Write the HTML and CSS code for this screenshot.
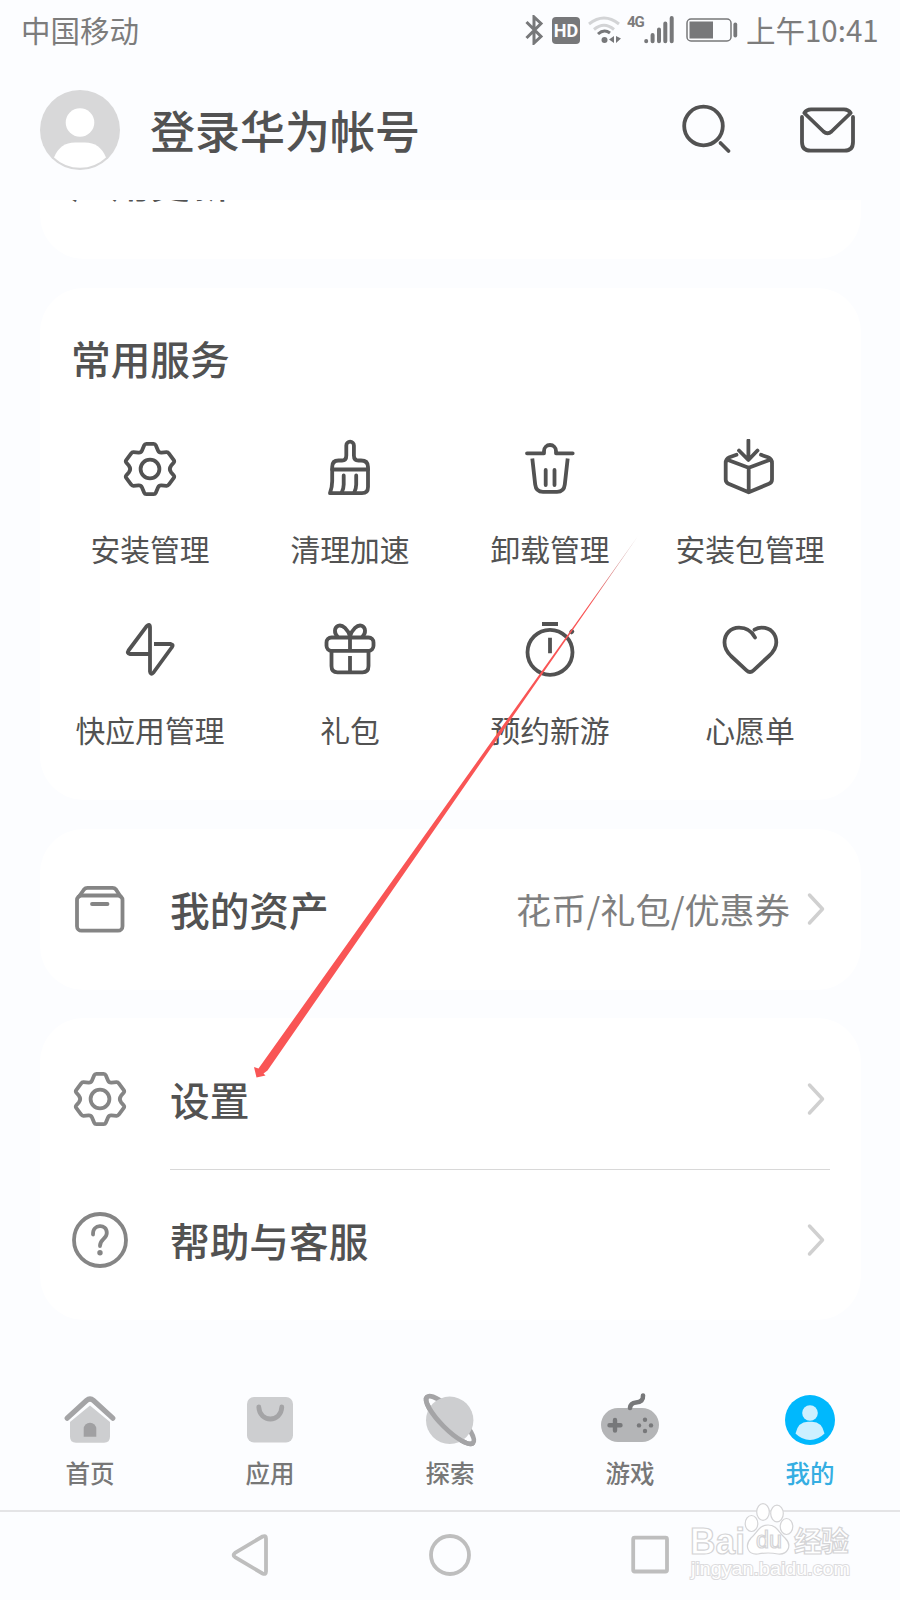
FILE: index.html
```html
<!DOCTYPE html>
<html lang="zh-CN">
<head>
  <meta charset="UTF-8">
  <meta name="viewport" content="width=device-width, initial-scale=1.0">
  <title>我的</title>
  <link rel="stylesheet" href="styles.css">
</head>
<body>
  <!-- Shared icons -->
  <svg width="0" height="0" class="defs">
    <symbol id="gear" viewBox="0 0 60 60">
      <path d="M26.3 4.8H33.7Q35.2 4.8 35.8 6.2L38 11.5Q39 13.8 41.5 13.6L46.5 13.2Q48 13.1 48.8 14.4L53.8 21.2Q54.7 22.5 53.6 23.8L51 26.8Q48.6 30 51 33.2L53.6 36.2Q54.7 37.5 53.8 38.8L48.8 45.6Q48 46.9 46.5 46.8L41.5 46.4Q39 46.2 38 48.5L35.8 53.8Q35.2 55.2 33.7 55.2H26.3Q24.8 55.2 24.2 53.8L22 48.5Q21 46.2 18.5 46.4L13.5 46.8Q12 46.9 11.2 45.6L6.2 38.8Q5.3 37.5 6.4 36.2L9 33.2Q11.4 30 9 26.8L6.4 23.8Q5.3 22.5 6.2 21.2L11.2 14.4Q12 13.1 13.5 13.2L18.5 13.6Q21 13.8 22 11.5L24.2 6.2Q24.8 4.8 26.3 4.8Z"/>
      <circle cx="30" cy="30" r="9.4"/>
    </symbol>
    <symbol id="chevron" viewBox="0 0 20 36">
      <path d="M3.5 4L16.5 18L3.5 32"/>
    </symbol>
  </svg>

  <div class="status-bar">
    <span class="carrier">中国移动</span>
    <div class="status-icons">
      <svg class="bluetooth" width="20" height="30" viewBox="0 0 20 30">
        <path d="M2.5 7L17 21.5L10 28V2L17 8.5L2.5 23"/>
      </svg>
      <span class="hd">HD</span>
      <svg class="wifi" width="34" height="30" viewBox="0 0 34 30">
        <path class="weak" d="M1 9Q16 -3 31 9M6 14.5Q16 6 26 14.5"/>
        <path d="M10 19Q16 13.5 22 18"/>
        <circle cx="16.5" cy="25" r="3"/>
        <path class="fill" d="M26 21v7l-5-3.5zM28 21v7l5-4.5z"/>
      </svg>
      <span class="net">4G</span>
      <svg class="signal" width="30" height="30" viewBox="0 0 30 30">
        <path d="M2.2 26V26.2M8.6 20V26.2M15 14.5V26.2M21.3 8.5V26.2M27.7 3V26.2"/>
      </svg>
      <svg class="battery" width="52" height="26" viewBox="0 0 52 26">
        <rect x="1" y="2" width="44" height="22" rx="4"/>
        <rect class="fill" x="3.5" y="4.5" width="23.5" height="17"/>
        <path d="M49.3 7.5V18.5"/>
      </svg>
    </div>
    <span class="time">上午10:41</span>
  </div>

  <header class="header">
    <svg class="avatar" width="80" height="80" viewBox="0 0 80 80">
      <circle cx="40" cy="40" r="40" fill="#d8d8d9"/>
      <circle cx="40" cy="32.5" r="14.3" fill="#fff"/>
      <path d="M14 67.5Q20 52.5 35 52.5H45Q60 52.5 66 67.5Q55 77.8 40 77.8T14 67.5Z" fill="#fff"/>
    </svg>
    <h1 class="login">登录华为帐号</h1>
    <svg class="icon search" width="60" height="60" viewBox="0 0 60 60">
      <circle cx="28.5" cy="26" r="19.3"/>
      <path d="M45.5 43L53.5 51"/>
    </svg>
    <svg class="icon" width="60" height="60" viewBox="0 0 60 60">
      <path d="M4 17V42Q4 50.7 12.5 50.7H46.5Q55 50.7 55 42V17"/>
      <path d="M6.3 13Q8.500 9.300 13 9.300H46Q50.500 9.300 52.700 13L33.500 31.500Q29.500 35 25.500 31.500Z"/>
    </svg>
  </header>

  <main class="content">
    <section class="card card-update">
      <h2>应用更新</h2>
    </section>

    <section class="card card-services">
      <h2>常用服务</h2>
      <div class="services">
        <div class="service">
          <svg class="icon" width="60" height="60"><use href="#gear"/></svg>
          <span>安装管理</span>
        </div>
        <div class="service">
          <svg class="icon" width="60" height="60" viewBox="0 0 60 60">
            <path d="M26.3 16.5V6.5a3.8 3.8 0 0 1 7.6 0V16.5Q33.9 21.5 38.5 21.5H41Q48 21.5 48 28V48Q48 54.2 42 54.2H10Q12.2 48 12.2 42V28Q12.2 21.5 18.5 21.5H22Q26.3 21.5 26.3 16.5Z"/>
            <path d="M12.2 30.5H48M23.7 36.5v9q0 4-2 8M36.2 36.5v9q0 4-2 8"/>
          </svg>
          <span>清理加速</span>
        </div>
        <div class="service">
          <svg class="icon" width="60" height="60" viewBox="0 0 60 60">
            <path d="M7 14.3H24V12a6 6 0 0 1 12 0v2.3H52.7"/>
            <path d="M12.3 19.5L15.2 45.5Q16 52.8 23 52.8H37Q44 52.8 44.8 45.5L47.7 19.5" stroke-linecap="butt"/>
            <path d="M25.7 31V46M34.5 31V46"/>
          </svg>
          <span>卸载管理</span>
        </div>
        <div class="service">
          <svg class="icon" width="60" height="60" viewBox="0 0 60 60">
            <path d="M28.4 1.5V20.5M19 11.5L28.4 21L37.5 11.5"/>
            <path d="M16.5 15.8L9.5 18.3Q5.7 20 5.7 24V40.5Q5.7 43.5 8.5 44.7L28.7 53.3L49 44.7Q52 43.5 52 40.5V24Q52 20 48 18.3L41 15.8M8 21L28.7 28.8L49.5 21M28.7 28.8V53"/>
          </svg>
          <span>安装包管理</span>
        </div>
        <div class="service">
          <svg class="icon" width="60" height="60" viewBox="0 0 60 60">
            <path d="M30 34H10Q6.5 33.5 8.5 30.5L26.5 6.3Q29.8 3 30 7V51.5Q30.5 55.5 33.5 52.5L51.7 27.5Q54 24.5 51 24H34" stroke-linecap="butt"/>
          </svg>
          <span>快应用管理</span>
        </div>
        <div class="service">
          <svg class="icon" width="60" height="60" viewBox="0 0 60 60">
            <rect x="6.5" y="17.5" width="47" height="13.3" rx="5"/>
            <path d="M11.5 31V46Q11.5 52.3 17.5 52.3H42.5Q48.5 52.3 48.5 46V31M30 17V31M30 36V52" stroke-linecap="butt"/>
            <path d="M30 16.5C28 9.5 22.5 4.3 18.3 5.8C14 7.5 14 13 17.5 16.5M30 16.5C32 9.5 37.5 4.3 41.7 5.8C46 7.5 46 13 42.5 16.5"/>
          </svg>
          <span>礼包</span>
        </div>
        <div class="service">
          <svg class="icon" width="60" height="60" viewBox="0 0 60 60">
            <circle cx="30" cy="32.3" r="22.5"/>
            <path d="M22 4H38M30 17.7V33.3" stroke-linecap="butt"/>
            <path d="M51.5 12L52 11.5" stroke-width="4.5"/>
          </svg>
          <span>预约新游</span>
        </div>
        <div class="service">
          <svg class="icon" width="60" height="60" viewBox="0 0 60 60">
            <path d="M35 17.5C32 11.5 26 7.7 19 7.7C10.5 7.7 4.5 14 4.5 22.5C4.5 28 7 32 11 36L26.5 50.3Q30 53.5 33.5 50.3L49 36C53.5 31.8 56.3 28 56.3 22.5C56.3 13.5 50.5 7.7 41.7 7.7Q38 7.7 34.5 9.7"/>
          </svg>
          <span>心愿单</span>
        </div>
      </div>
    </section>

    <section class="card card-assets">
      <div class="row">
        <svg class="icon grey" width="60" height="60" viewBox="0 0 60 60">
          <rect x="7" y="16.5" width="45.5" height="35.2" rx="4.5"/>
          <path d="M9 17.5L14 10.5Q15.3 8.8 17.5 8.8H42.5Q44.7 8.8 46 10.5L50.5 17.5M22 25H37.5"/>
        </svg>
        <h2>我的资产</h2>
        <span class="hint">花币/礼包/优惠券</span>
        <svg class="chevron" width="20" height="36"><use href="#chevron"/></svg>
      </div>
    </section>

    <section class="card card-settings">
      <div class="row">
        <svg class="icon grey" width="60" height="60"><use href="#gear"/></svg>
        <h2>设置</h2>
        <svg class="chevron" width="20" height="36"><use href="#chevron"/></svg>
      </div>
      <div class="divider"></div>
      <div class="row">
        <svg class="icon grey" width="60" height="60" viewBox="0 0 60 60">
          <circle cx="30" cy="30" r="26"/>
          <path d="M23 24.5C22.5 13.5 37 13.5 36.8 23C36.8 29 30 29 30 36"/>
          <circle class="dot" cx="30" cy="42.8" r="2.7"/>
        </svg>
        <h2>帮助与客服</h2>
        <svg class="chevron" width="20" height="36"><use href="#chevron"/></svg>
      </div>
    </section>
  </main>

  <nav class="tabs">
    <div class="tab">
      <svg width="60" height="60" viewBox="0 0 60 60">
        <path d="M30 15.5L50 32V46.5Q50 52.7 44 52.7H16Q10 52.7 10 46.5V32Z" fill="#cdced0"/>
        <path d="M7.2 28.2L26.5 10.5Q30 7.5 33.5 10.5L52.8 28.2" fill="none" stroke="#a4a4a6" stroke-width="5.2" stroke-linecap="round"/>
        <path d="M23.7 46.7V39a6.3 6.3 0 0 1 12.6 0V46.7Z" fill="#a0a0a2"/>
      </svg>
      <span>首页</span>
    </div>
    <div class="tab">
      <svg width="60" height="60" viewBox="0 0 60 60">
        <rect x="7" y="7" width="46" height="45.5" rx="7" fill="#cdced0"/>
        <path d="M18.8 17C19.5 33 41.2 33 41.8 17" fill="none" stroke="#a4a4a6" stroke-width="4.8" stroke-linecap="round"/>
      </svg>
      <span>应用</span>
    </div>
    <div class="tab">
      <svg width="60" height="60" viewBox="0 0 60 60">
        <g fill="none" stroke="#a4a4a6" stroke-width="4.8">
          <ellipse cx="0" cy="0" rx="32.5" ry="9" transform="translate(30 30) rotate(45)"/>
          <circle cx="29.7" cy="30.3" r="23.7" fill="#cdced0" stroke="none"/>
          <path d="M-32.5 0A32.5 9 0 0 0 32.5 0" transform="translate(30 30) rotate(45)"/>
        </g>
      </svg>
      <span>探索</span>
    </div>
    <div class="tab">
      <svg width="60" height="60" viewBox="0 0 60 60">
        <rect x="1" y="18" width="58" height="34" rx="17" fill="#b4b5b7"/>
        <path d="M30 18Q30.5 13 36 12.5Q43.5 12 43 5.5" fill="none" stroke="#77787a" stroke-width="4.6" stroke-linecap="round"/>
        <path d="M15 30V40.6M9.5 35.3H20.5" stroke="#77787a" stroke-width="4.4" stroke-linecap="round"/>
        <g fill="#77787a">
          <circle cx="45" cy="29.8" r="2.2"/>
          <circle cx="45" cy="41" r="2.2"/>
          <circle cx="39" cy="35.4" r="2.2"/>
          <circle cx="51" cy="35.4" r="2.2"/>
        </g>
      </svg>
      <span>游戏</span>
    </div>
    <div class="tab active">
      <svg width="60" height="60" viewBox="0 0 60 60">
        <circle cx="30" cy="30" r="25" fill="#00b8fd"/>
        <circle cx="30" cy="23" r="7.8" fill="#cdf0ff"/>
        <path d="M15.5 43.5Q18 31.7 28 31.7H32Q42 31.7 44.5 43.5Q38 50 30 50T15.5 43.5Z" fill="#cdf0ff"/>
      </svg>
      <span>我的</span>
    </div>
  </nav>

  <div class="system-nav">
    <svg width="48" height="48" viewBox="0 0 48 48">
      <path d="M9 21.9L36.5 5.5Q40 4 40 7.5V40.5Q40 44 36.5 42.5L9 26.1Q6.2 24 9 21.9Z"/>
    </svg>
    <svg width="48" height="48" viewBox="0 0 48 48">
      <circle cx="24" cy="24" r="19"/>
    </svg>
    <svg width="48" height="48" viewBox="0 0 48 48">
      <rect x="7.2" y="6.7" width="33.8" height="33.8" rx="1.5"/>
    </svg>
  </div>

  <!-- Arrow pointing at the settings row -->
  <svg class="arrow" width="900" height="1600" viewBox="0 0 900 1600">
    <defs>
      <linearGradient id="fade" gradientUnits="userSpaceOnUse" x1="638" y1="536" x2="590" y2="604">
        <stop offset="0" stop-color="#a06a6a" stop-opacity=".6"/>
        <stop offset="1" stop-color="#f95555"/>
      </linearGradient>
    </defs>
    <path d="M638 536L258.5 1068.5L254 1067L256.5 1077.5L265.5 1075.5L263.5 1073.5L267.5 1070.5Z" fill="url(#fade)"/>
  </svg>

  <!-- Watermark -->
  <svg class="watermark" width="170" height="84" viewBox="0 0 170 84">
    <text x="3" y="52" font-size="36" font-weight="700" textLength="55" lengthAdjust="spacingAndGlyphs">Bai</text>
    <g>
      <ellipse cx="64.5" cy="21.5" rx="6.3" ry="8"/>
      <ellipse cx="76" cy="10" rx="6.3" ry="8.3"/>
      <ellipse cx="90" cy="11.5" rx="6.3" ry="8.3"/>
      <ellipse cx="99.5" cy="24.5" rx="6.3" ry="8"/>
      <path d="M81 23C90 23 92 31 98 36C106 44 100 53 91 52Q81 50 71 52C61 53 57 44 64 36C70 31 72 23 81 23Z"/>
    </g>
    <text class="du" x="69" y="46" font-size="23" textLength="26" lengthAdjust="spacingAndGlyphs">du</text>
    <text x="107" y="50" font-size="28" font-weight="700" textLength="55">经验</text>
    <text class="url" x="4" y="73" font-size="19" textLength="159" lengthAdjust="spacingAndGlyphs">jingyan.baidu.com</text>
  </svg>
</body>
</html>
```
FILE: styles.css
```css
* {
  margin: 0;
  padding: 0;
  box-sizing: border-box;
}

body {
  position: relative;
  display: flex;
  flex-direction: column;
  width: 900px;
  height: 1600px;
  overflow: hidden;
  background: #fcfdff;
  color: #525252;
  font-family: "Noto Sans CJK SC", sans-serif;
}

svg {
  display: block;
  flex-shrink: 0;
}

.defs {
  position: absolute;
}

.icon {
  fill: none;
  stroke: #525252;
  stroke-width: 3.8;
  stroke-linecap: round;
  stroke-linejoin: round;
}

.grey {
  stroke: #858585;
}

.grey .dot {
  fill: #858585;
  stroke: none;
}

/* Status bar */
.status-bar {
  display: flex;
  align-items: center;
  height: 60px;
  padding: 0 23px 0 21px;
  color: #7c7c7c;
  font-size: 29.5px;
  line-height: 58px;
}

.carrier,
.time {
  height: 60px;
}

.status-icons {
  display: flex;
  align-items: center;
  margin-left: auto;
  margin-right: 8px;
  fill: none;
  stroke: #77787a;
  stroke-width: 3;
}

.hd {
  width: 28px;
  height: 27px;
  margin: 0 8px;
  border-radius: 4px;
  background: #77787a;
  color: #fcfdff;
  font: 700 18px/28px Roboto, sans-serif;
  text-align: center;
}

.wifi .weak {
  stroke: #d3d4d6;
}

.wifi circle,
.wifi .fill,
.battery .fill {
  fill: #77787a;
  stroke: none;
}

.net {
  align-self: flex-start;
  width: 22px;
  padding-left: 5px;
  font: 700 15px/15px Roboto, sans-serif;
  letter-spacing: -1px;
}

.signal {
  stroke-width: 4;
  stroke-linecap: round;
}

.battery {
  margin-left: 12px;
}

.battery rect {
  stroke-width: 1.5;
}

.battery path {
  stroke-width: 3.8;
  stroke-linecap: round;
}

.time {
  width: 131px;
  white-space: nowrap;
}

/* Header */
.header {
  display: flex;
  align-items: center;
  height: 140px;
  padding: 0 42px 0 40px;
}

.login {
  margin-left: 30px;
  font-size: 45px;
  font-weight: 500;
  line-height: 60px;
}

.search {
  margin-left: auto;
  margin-right: 63px;
}

/* Cards */
.content {
  display: flex;
  flex-direction: column;
  height: 1155px;
  padding: 0 39px 0 40px;
  overflow: hidden;
}

.card {
  flex-shrink: 0;
  margin-bottom: 29px;
  border-radius: 44px;
  background: #fff;
}

.card h2 {
  font-size: 39.7px;
  font-weight: 500;
  line-height: 50px;
}

/* First card is scrolled under the header */
.card-update {
  height: 159px;
  margin-top: -100px;
  padding: 56px 31px 0;
}

.card-services {
  height: 512px;
  padding: 45px 10px 0;
}

.card-services h2 {
  padding-left: 21px;
}

.services {
  display: grid;
  grid-template-columns: repeat(4, 200px);
  grid-auto-rows: 181px;
  padding-top: 56px;
}

.service {
  display: flex;
  flex-direction: column;
  align-items: center;
  gap: 28px;
  font-size: 29.8px;
  line-height: 42px;
}

.card-assets {
  height: 161px;
  margin-bottom: 28px;
  padding: 10px 0;
}

.card-settings {
  height: 302px;
  padding: 11px 0 10px;
}

.row {
  display: flex;
  align-items: center;
  height: 140px;
  padding: 0 35px 0 30px;
}

.row h2 {
  margin-left: 40px;
  margin-right: auto;
}

.hint {
  margin-right: 16px;
  color: #7f7f7f;
  font-size: 35.2px;
  line-height: 50px;
}

.chevron {
  fill: none;
  stroke: #d0d0d0;
  stroke-width: 3.5;
  stroke-linecap: round;
  stroke-linejoin: round;
}

.divider {
  height: 1px;
  margin: 0 31px 0 130px;
  background: #d8d8d8;
}

/* Bottom tabs */
.tabs {
  display: grid;
  grid-template-columns: repeat(5, 1fr);
  height: 157px;
  padding-top: 35px;
  border-bottom: 2px solid #e4e4e6;
}

.tab {
  display: flex;
  flex-direction: column;
  align-items: center;
  gap: 5px;
  color: #777;
  font-size: 24.5px;
  font-weight: 500;
  line-height: 36px;
}

.tab.active {
  color: #35aee2;
}

.system-nav {
  display: flex;
  justify-content: center;
  gap: 152px;
  padding-top: 19px;
  fill: none;
  stroke: #bebebe;
  stroke-width: 3.8;
}

.arrow {
  position: absolute;
  top: 0;
  left: 0;
}

.watermark {
  position: absolute;
  top: 1502px;
  left: 687px;
  fill: #fff;
  stroke: #d4d4d6;
  stroke-width: 1.2;
  font-family: "Liberation Sans", "Noto Sans CJK SC", sans-serif;
}

.watermark .url {
  stroke: #dcdcde;
  stroke-width: 2px;
  paint-order: stroke;
}
```
